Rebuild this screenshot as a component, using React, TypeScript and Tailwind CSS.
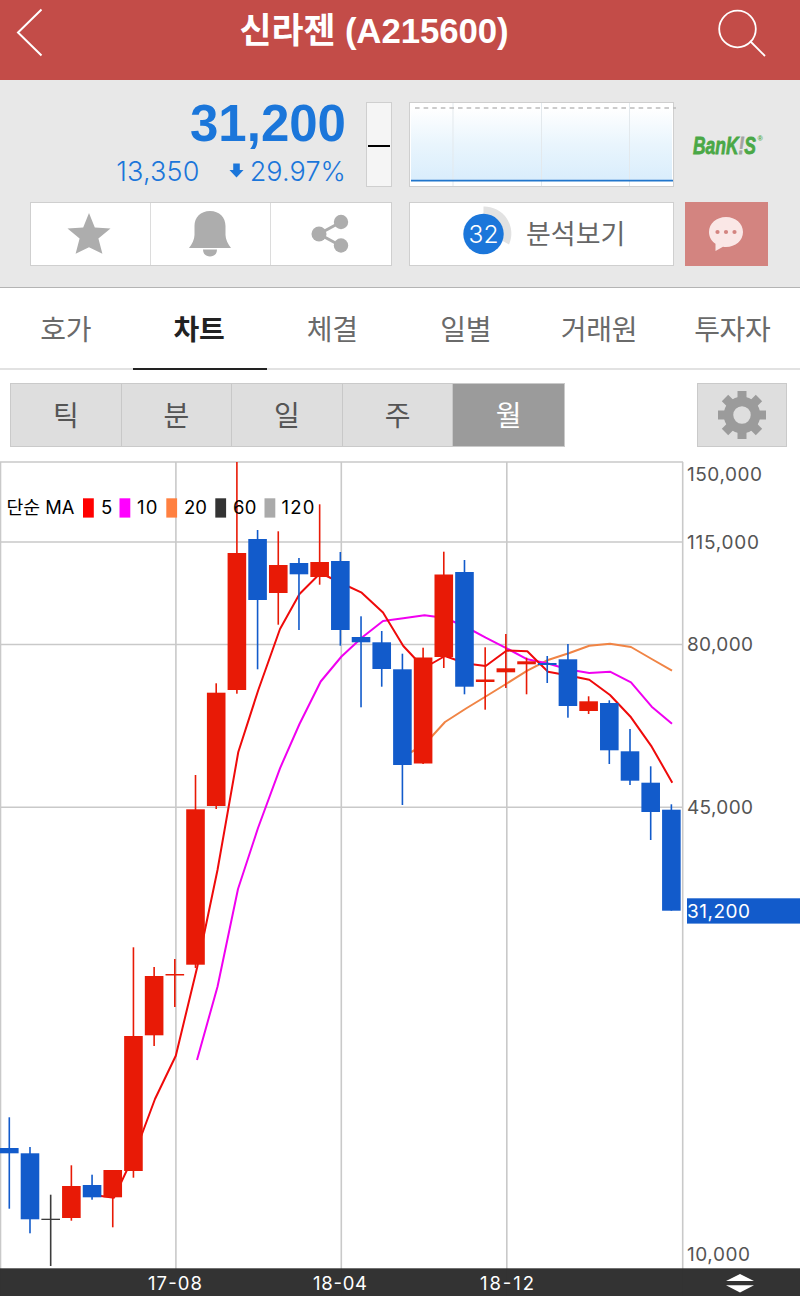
import React, { useState } from 'react';
import clsx from 'clsx';

// ─── Data ──────────────────────────────────────────────────────────────────────

type Tone = 'up' | 'down' | 'flat';
// tone, high, body top, body bottom, low (chart y units)
type Candle = [Tone, number, number, number, number];

const TONES: Record<Tone, string> = { up: '#e81a06', down: '#125bcb', flat: '#3c3c3c' };

const CANDLES: Candle[] = [
  ['down', 1117.3, 1148, 1153.3, 1208.7],
  ['down', 1147, 1153.3, 1219.3, 1233.3],
  ['flat', 1194.7, 1218.7, 1220, 1266],
  ['up', 1165.3, 1186, 1218, 1220.7],
  ['down', 1174.7, 1185, 1197.3, 1199.7],
  ['up', 1170, 1170, 1197.3, 1227.3],
  ['up', 947.3, 1036, 1171, 1177.7],
  ['up', 967, 976, 1035.3, 1046],
  ['up', 959, 974, 975.5, 1007],
  ['up', 775, 809.3, 964.7, 968],
  ['up', 683.3, 692.7, 806, 809],
  ['up', 462, 553, 690, 693.7],
  ['down', 530, 539, 600, 669.3],
  ['up', 531.3, 565, 593, 624.7],
  ['down', 558, 563, 574.3, 630],
  ['up', 504.3, 562, 577, 584.7],
  ['down', 552, 561, 630, 645.7],
  ['down', 616.3, 637, 642.3, 707.3],
  ['down', 631, 642.3, 669, 686.7],
  ['down', 653.7, 669.3, 765, 805],
  ['up', 647.7, 657.5, 763.5, 764],
  ['up', 551.7, 574.5, 657, 668],
  ['down', 560, 572, 686.7, 694.3],
  ['up', 647.3, 679.5, 682, 709.7],
  ['up', 634, 668.3, 672.3, 688],
  ['up', 657.7, 661.3, 664.3, 694.3],
  ['down', 656, 663, 665, 683],
  ['down', 644, 659.3, 706, 717.7],
  ['up', 696.3, 701.3, 711, 714],
  ['down', 700.3, 703, 750.3, 764],
  ['down', 729, 751.3, 780.7, 785],
  ['down', 766.3, 782.7, 812, 840],
  ['down', 804.3, 809.7, 910.7, 910.7],
];

const MA5 = '93.5,1195 114,1197.7 134.5,1154 155,1099 175.8,1055.7 197,968 217.5,870 238.3,752 258.3,690 280,629 299.5,594 320.5,573 341,583 361.7,592.7 383,612.5 403.3,646 424,668 445,656 466,663.5 485.7,666 506.7,650.5 527.3,651.3 548,671.7 568.5,675.5 589.3,679.7 610,695 631,717.3 651.7,746.7 672.3,782.7';
const MA10 = '197,1060 217.5,986.7 238,889 258,828 280,768.3 299.5,724 320.7,681.5 341.5,656.5 361.7,637.7 383,621 403.3,618.3 424.5,615.3 445,618 466,627 485.7,637.7 506.7,648.3 527.3,659.3 548,663.5 568.5,669.5 589.3,673 610,671.7 631,682.3 651.7,706.7 672,723.7';
const MA20 = '404,756 424,745 445,722 466,708.5 485.7,696.5 506,684 527.3,670.7 548,660 568.7,653.3 589.3,645.7 610,643.7 631,647 651.7,659 672,670.7';

const LEGEND = [
  { label: '5', color: '#ff0000', x: 83, tx: 101, w: 10.5 },
  { label: '10', color: '#ff00ff', x: 119.5, tx: 137, w: 20.5 },
  { label: '20', color: '#ff8040', x: 166.3, tx: 184, w: 23 },
  { label: '60', color: '#333333', x: 215.3, tx: 233, w: 23.5 },
  { label: '120', color: '#aaaaaa', x: 264.5, tx: 281.5, w: 33 },
];

const PRICES = [
  { label: '150,000', y: 481, w: 75 },
  { label: '115,000', y: 549, w: 72 },
  { label: '80,000', y: 651, w: 66 },
  { label: '45,000', y: 814, w: 66 },
  { label: '10,000', y: 1261, w: 63 },
];

const DATES = [
  { label: '17-08', x: 148 },
  { label: '18-04', x: 313 },
  { label: '18-12', x: 480 },
];

const TABS = ['호가', '차트', '체결', '일별', '거래원', '투자자'];
const PERIODS = ['틱', '분', '일', '주', '월'];

const TEETH = [0, 45, 90, 135, 180, 225, 270, 315];

// ─── Header ────────────────────────────────────────────────────────────────────

const Header: React.FC = () => (
  <header className="flex h-20 items-start justify-between bg-[#c34c48] pr-[34px] pl-4">
    <button aria-label="뒤로" className="pt-2">
      <svg width="28" height="50" viewBox="0 0 28 50" fill="none" stroke="#fff" strokeWidth="2">
        <path d="M25.5 1.5 L2 24.5 L25.5 47.5" />
      </svg>
    </button>
    <h1 className="pt-2 pr-[13px] text-[34.8px] leading-[46px] font-bold tracking-[-0.1px] text-white">
      신라젠 (A215600)
    </h1>
    <button aria-label="검색" className="pt-[9px]">
      <svg width="49" height="50" viewBox="0 0 49 50" fill="none" stroke="#fff" strokeWidth="1.8">
        <circle cx="20.5" cy="20" r="18.3" />
        <path d="M33 32 L48 47" />
      </svg>
    </button>
  </header>
);

// ─── Quote panel ───────────────────────────────────────────────────────────────

const MiniChart: React.FC = () => (
  <svg width="268" height="85" viewBox="0 0 268 85" className="-mr-[3px]">
    <defs>
      <linearGradient id="mini" x1="0" y1="0" x2="0" y2="1">
        <stop offset="0" stopColor="#ffffff" />
        <stop offset="0.5" stopColor="#e9f5fd" />
        <stop offset="1" stopColor="#d9edfc" />
      </linearGradient>
    </defs>
    <rect x="0.5" y="0.5" width="264" height="84" fill="#fff" stroke="#cfcfcf" />
    <rect x="2" y="6" width="261" height="73" fill="url(#mini)" />
    <path d="M44 1V84M132.5 1V84M220.5 1V84" stroke="#e3e9ed" />
    <path d="M6 6H267" stroke="#bcbcbc" strokeWidth="1.7" strokeDasharray="4.6 4" />
    <path d="M2 78.7H264" stroke="#2176cc" strokeWidth="1.8" />
  </svg>
);

const Quote: React.FC = () => (
  <div className="flex w-[362px] justify-between">
    <div className="flex w-[316px] flex-col items-end text-[#1b76da]">
      <strong className="text-[51px] leading-[44px] font-bold">31,200</strong>
      <div className="flex items-center pt-[11px] font-[Inter] text-[27px] leading-[29px] font-light">
        <span className="tracking-[0.2px]">13,350</span>
        <svg width="15" height="15" viewBox="0 0 16 16" fill="currentColor" className="mr-[6px] mb-[3px] ml-[29px]">
          <path d="M4.5 0.5h7v7H15.5L8 15.5 0.5 7.500H4.500z" />
        </svg>
        <span className="tracking-[0.1px]">29.97%</span>
      </div>
    </div>
    <div className="flex h-[85px] w-[26px] items-center justify-center border border-[#cfcfcf] bg-[#f5f5f5]">
      <div className="mt-[2px] h-[2px] w-[22px] bg-black" />
    </div>
  </div>
);

const Bankis: React.FC = () => (
  <svg width="76" height="26" viewBox="0 0 76 26" className="mt-[30px] ml-[10px] font-bold italic">
    <text x="1" y="21.500" fontSize="24" textLength="63" lengthAdjust="spacingAndGlyphs" fill="#4aa846" stroke="#4aa846" strokeWidth="0.8">
      BanK<tspan fill="#a3a3a3" stroke="#a3a3a3">!</tspan>S
    </text>
    <text x="65.500" y="9" fontSize="7" fill="#4aa846">®</text>
  </svg>
);

const Actions: React.FC = () => (
  <div className="grid h-16 w-[362px] grid-cols-3 divide-x divide-[#dcdcdc] border border-[#cfcfcf] bg-white">
    <button aria-label="관심" className="flex items-center justify-center pr-1">
      <svg width="44" height="42" viewBox="0 0 44 42" fill="#adadad">
        <path d="M22 0 L27.8 14.5 L43.5 15.4 L31.4 25.4 L35.4 40.8 L22 34.2 L8.6 40.8 L12.6 25.4 L0.5 15.4 L16.2 14.5Z" />
      </svg>
    </button>
    <button aria-label="알림" className="flex items-center justify-center pr-[2px]">
      <svg width="44" height="46" viewBox="0 0 44 46" fill="#adadad">
        <path d="M22 0C12.500 0 6.500 6.500 6.500 15V24C6.500 28.500 4 33 1 37H43C40 33 37.500 28.500 37.500 24V15C37.500 6.500 31.500 0 22 0Z" />
        <path d="M15 38.500H29C29 43 26 45.500 22 45.500S15 43 15 38.500Z" />
      </svg>
    </button>
    <button aria-label="공유" className="flex items-center justify-center pr-[3px]">
      <svg width="38" height="40" viewBox="0 0 38 40" fill="#adadad" stroke="#adadad">
        <path d="M30 8 L8 20 L30 32" fill="none" strokeWidth="3" />
        <circle cx="30" cy="8" r="7.200" stroke="none" />
        <circle cx="8" cy="20" r="7.500" stroke="none" />
        <circle cx="30" cy="31.500" r="7.200" stroke="none" />
      </svg>
    </button>
  </div>
);

const QuotePanel: React.FC = () => (
  <section className="h-52 border-b border-[#b4b4b4] bg-[#e8e8e8] pt-[22px] pl-[30px]">
    <div className="flex h-[85px]">
      <Quote />
      <div className="ml-[17px]">
        <MiniChart />
      </div>
      <div className="ml-2">
        <Bankis />
      </div>
    </div>
    <div className="mt-[15px] flex">
      <Actions />
      <button className="ml-[17px] flex h-16 w-[265px] items-center border border-[#cfcfcf] bg-white pl-[52px]">
        <svg width="52" height="56" viewBox="0 0 52 56">
          <path d="M21.500 0.500A27 27 0 0 1 47 38.500L39 34L21.500 27Z" fill="#e2e2e2" />
          <circle cx="21.500" cy="28" r="20.200" fill="#1b76da" />
          <text x="21.500" y="36.800" fontSize="24.500" textAnchor="middle" fill="#fff" className="font-[Inter] font-light">32</text>
        </svg>
        <span className="mt-[3px] ml-3 text-[27px] text-[#666]">분석보기</span>
      </button>
      <button aria-label="토론" className="ml-[11px] flex h-16 w-[83px] items-center justify-center bg-[#d38480] pr-px">
        <svg width="36" height="36" viewBox="0 0 36 36">
          <path d="M18 1C8.500 1 1 7.500 1 16C1 21 3.500 25 7.500 27.700V35L15 30.700Q16.500 31 18 31C27.500 31 35 24.500 35 16C35 7.500 27.500 1 18 1Z" fill="#fae7e6" />
          <g fill="#d38480">
            <circle cx="9.500" cy="16" r="2.100" />
            <circle cx="18" cy="16" r="2.100" />
            <circle cx="26.500" cy="16" r="2.100" />
          </g>
        </svg>
      </button>
    </div>
  </section>
);

// ─── Chart ─────────────────────────────────────────────────────────────────────

const Chart: React.FC = () => (
  <svg width="800" height="835" viewBox="0 461 800 835" className="block font-[Inter,'Noto_Sans_CJK_KR',sans-serif]">
    {/* Grid */}
    <path
      d="M0 462H683M0 542H683M0 644.5H683M0 807.3H683M0.500 462V1296M175.900 462V1296M341.300 462V1296M506.800 462V1296M682.700 462V1296"
      stroke="#c9c9c9"
      strokeWidth="1.6"
    />

    {/* Moving averages */}
    <g fill="none" strokeWidth="2" strokeLinejoin="round">
      <polyline points={MA20} stroke="#f08445" />
      <polyline points={MA10} stroke="#f000f0" />
      <polyline points={MA5} stroke="#ef0a0a" />
    </g>

    {/* Candles */}
    {CANDLES.map(([tone, high, top, bottom, low], i) => {
      const x = 9.3 + i * 20.69;
      return (
        <g key={i} fill={TONES[tone]}>
          <rect x={x - 0.8} y={high} width={1.6} height={low - high} />
          <rect x={x - 9.3} y={top} width={18.6} height={bottom - top} />
        </g>
      );
    })}

    {/* Legend */}
    <g fontSize="18.5" fill="#000">
      <text x="6.500" y="514" textLength="68" lengthAdjust="spacingAndGlyphs">단순 MA</text>
      {LEGEND.map((item) => (
        <g key={item.label}>
          <rect x={item.x} y="498.300" width="10.800" height="19.300" fill={item.color} />
          <text x={item.tx} y="514" textLength={item.w}>{item.label}</text>
        </g>
      ))}
    </g>

    {/* Price axis */}
    <g fontSize="19" fill="#555">
      {PRICES.map((p) => (
        <text key={p.label} x="687" y={p.y} textLength={p.w}>{p.label}</text>
      ))}
    </g>
    <rect x="687" y="898.300" width="113" height="25.300" fill="#125bcb" />
    <text x="687" y="918" fontSize="19" textLength="63" fill="#fff">31,200</text>

    {/* Date axis */}
    <rect x="0" y="1268.300" width="800" height="28" fill="#303030" fillOpacity="0.985" />
    <g fontSize="18.5" fill="#fff">
      {DATES.map((d) => (
        <text key={d.label} x={d.x} y="1290.300" textLength="54">{d.label}</text>
      ))}
    </g>
    <path d="M740 1274L754 1281H726ZM740 1292.500L754 1285.300H726Z" fill="#fff" />
  </svg>
);

// ─── App ───────────────────────────────────────────────────────────────────────

const App: React.FC = () => {
  const [tab, setTab]       = useState('차트');
  const [period, setPeriod] = useState('월');

  return (
    <div className="h-[1296px] w-[800px] overflow-hidden bg-white font-['Liberation_Sans','Noto_Sans_CJK_KR',sans-serif]">
      <Header />
      <QuotePanel />

      <nav className="grid h-[82px] grid-cols-6">
        {TABS.map((name) => (
          <button
            key={name}
            onClick={() => setTab(name)}
            className={clsx(
              'border-b-2 pt-[5px] pr-[2px] text-[28px] tracking-[-0.3px]',
              name === tab ? 'border-[#222] font-bold text-[#222]' : 'border-[#e2e2e2] text-[#6a6a6a]',
            )}
          >
            {name}
          </button>
        ))}
      </nav>

      <div className="flex justify-between pt-[13px] pr-[13px] pb-[14px] pl-[10px]">
        <div className="flex h-16 divide-x divide-[#c8c8c8] border border-[#cacaca]">
          {PERIODS.map((name) => (
            <button
              key={name}
              onClick={() => setPeriod(name)}
              className={clsx(
                'w-[110.6px] pt-1 text-[28px]',
                name === period ? 'bg-[#9b9b9b] text-white' : 'bg-[#dedede] text-[#555]',
              )}
            >
              {name}
            </button>
          ))}
        </div>
        <button aria-label="설정" className="flex h-16 w-[90px] items-center justify-center border border-[#cacaca] bg-[#dedede] pr-px">
          <svg width="48" height="48" viewBox="-24 -24 48 48" fill="#9b9b9b">
            {TEETH.map((deg) => (
              <rect key={deg} x="-4.5" y="-24" width="9" height="12" transform={`rotate(${deg})`} />
            ))}
            <circle r="13.500" fill="none" stroke="#9b9b9b" strokeWidth="9.500" />
          </svg>
        </button>
      </div>

      <Chart />
    </div>
  );
};

export default App;
